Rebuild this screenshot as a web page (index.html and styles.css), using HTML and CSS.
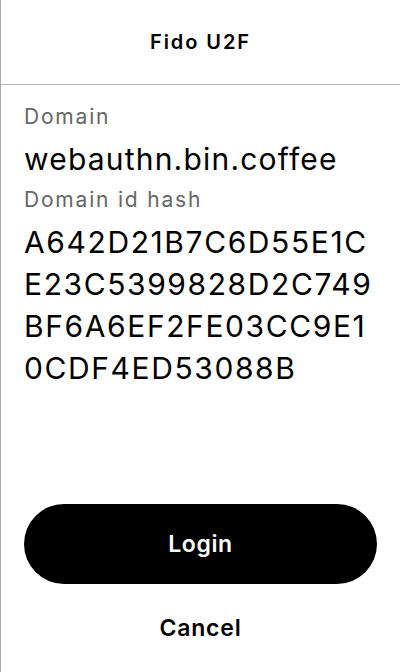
FILE: index.html
```html
<!DOCTYPE html>
<html>
<head>
<meta charset="utf-8">
<link rel="stylesheet" href="styles.css">
</head>
<body>
<div class="screen">
  <header class="header">
    <h1 class="title">Fido U2F</h1>
  </header>
  <main class="content">
    <div class="field">
      <div class="label">Domain</div>
      <div class="value">webauthn.bin.coffee</div>
    </div>
    <div class="field">
      <div class="label">Domain id hash</div>
      <div class="value hash">A642D21B7C6D55E1CE23C5399828D2C749BF6A6EF2FE03CC9E10CDF4ED53088B</div>
    </div>
  </main>
  <footer class="actions">
    <button class="btn-login">Login</button>
    <button class="btn-cancel">Cancel</button>
  </footer>
</div>
</body>
</html>
```
FILE: styles.css
```css
html, body {
  margin: 0;
  padding: 0;
  background: #fff;
}
body {
  font-family: Inter, "Noto Sans", sans-serif;
  color: #000;
}
.screen {
  width: 400px;
  height: 672px;
  box-sizing: border-box;
  border-left: 1px solid #a8a8a8;
  display: flex;
  flex-direction: column;
}
.header {
  height: 85px;
  box-sizing: border-box;
  border-bottom: 1px solid #b4b4b4;
  display: flex;
  align-items: center;
  justify-content: center;
  flex-shrink: 0;
}
.title {
  margin: 0;
  font-size: 20px;
  font-weight: 600;
  letter-spacing: 1.9px;
}
.content {
  flex: 1;
  padding: 17px 23px 0 23px;
  display: flex;
  flex-direction: column;
  gap: 5px;
}
.field {
  display: flex;
  flex-direction: column;
  gap: 6px;
}
.label {
  font-size: 21px;
  line-height: 30px;
  color: #666;
  letter-spacing: 1.8px;
}
.value {
  font-size: 30px;
  line-height: 42px;
  color: #000;
  letter-spacing: 1.2px;
}
.hash {
  word-break: break-all;
  letter-spacing: 1.6px;
}
.actions {
  display: flex;
  flex-direction: column;
  padding: 0 23px;
}
.btn-login {
  height: 80px;
  border: none;
  border-radius: 40px;
  background: #000;
  color: #fff;
  font-family: inherit;
  font-size: 23px;
  font-weight: 600;
  letter-spacing: 0.6px;
  cursor: pointer;
}
.btn-cancel {
  height: 88px;
  border: none;
  background: transparent;
  color: #000;
  font-family: inherit;
  font-size: 23px;
  font-weight: 600;
  letter-spacing: 0.8px;
  cursor: pointer;
}
```
